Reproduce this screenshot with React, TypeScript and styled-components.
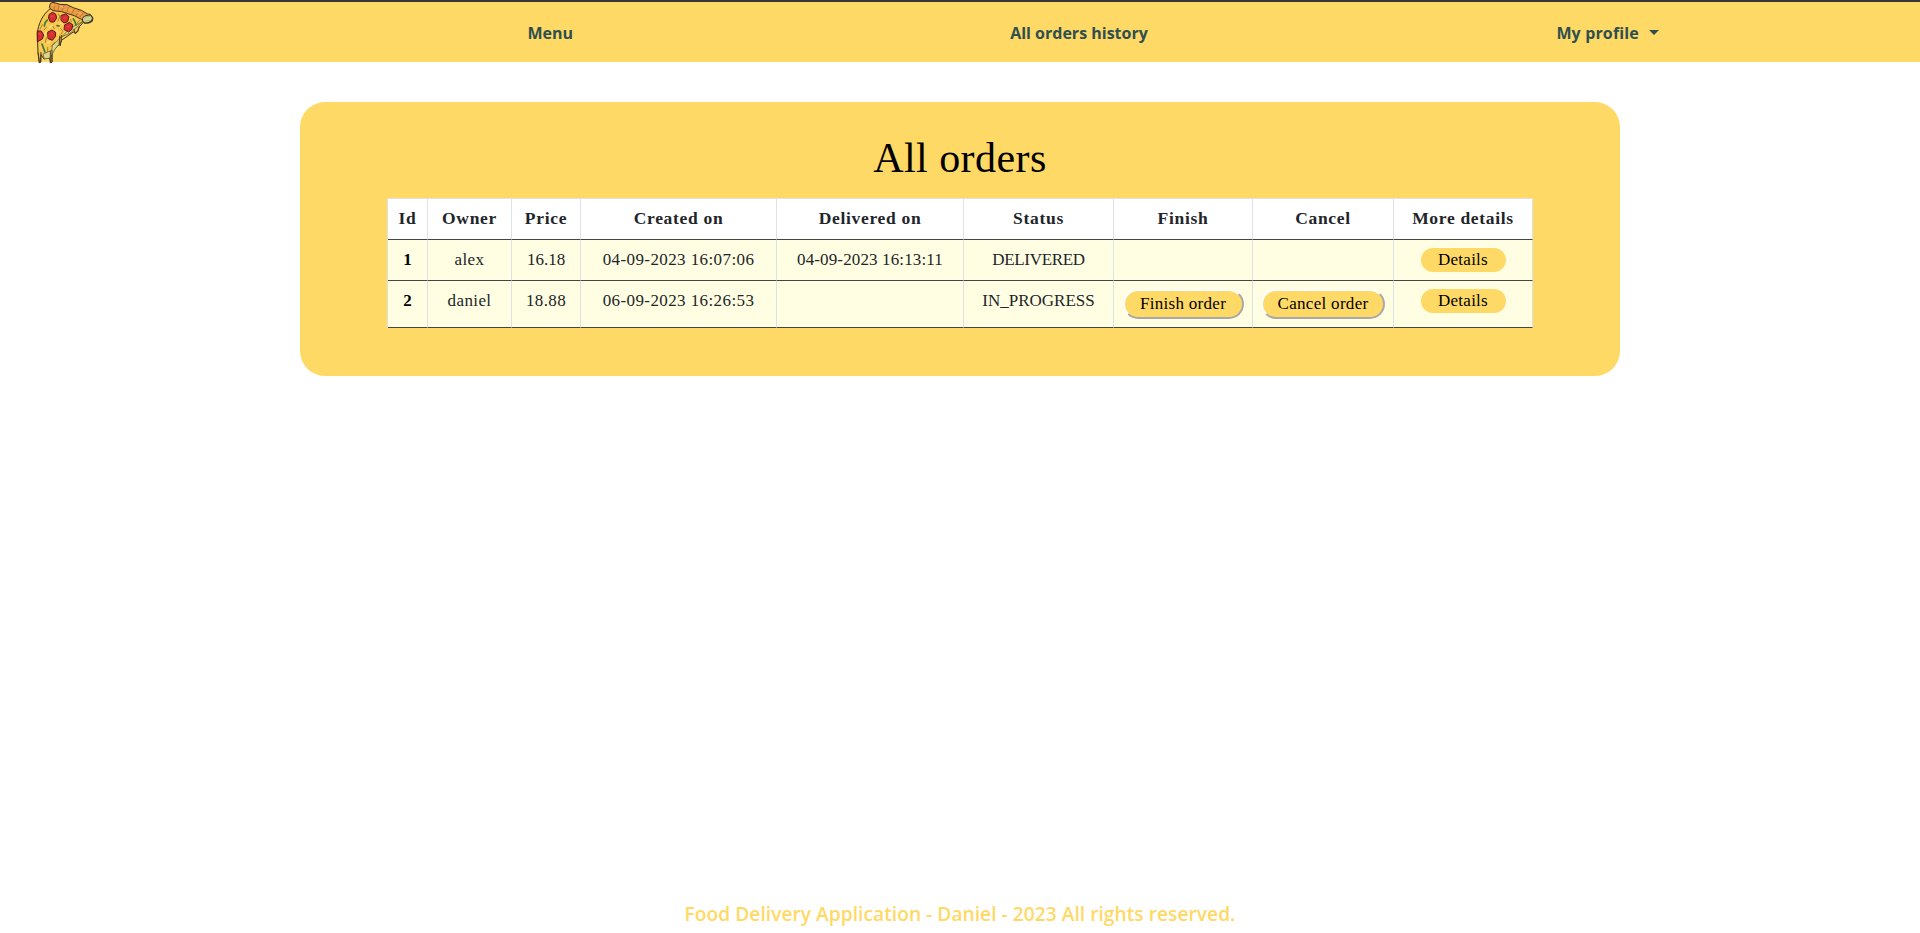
import React from "react";
import styled, { createGlobalStyle } from "styled-components";

const GlobalStyle = createGlobalStyle`
  *, *::before, *::after { box-sizing: border-box; }
  body {
    margin: 0;
    background: #fff;
    color: #212529;
    font-family: "Open Sans", "Noto Sans", sans-serif;
  }
`;

const Page = styled.div`
  min-height: 933px;
  display: flex;
  flex-direction: column;
`;

const Navbar = styled.nav`
  height: 62px;
  flex: none;
  display: flex;
  background: #ffd966;
  border-top: 2px solid #3a3536;
`;

const Brand = styled.a`
  width: 286px;
  height: 64px;
  flex: none;
  margin-top: -2px;
  padding-left: 25px;
  svg { display: block; }
`;

const NavList = styled.ul`
  list-style: none;
  margin: 0;
  padding: 0;
  width: 1586px;
  display: grid;
  grid-template-columns: repeat(3, 1fr);
`;

const NavItem = styled.li`
  display: flex;
  align-items: center;
  justify-content: center;
  padding-top: 2px;
`;

const NavLink = styled.a<{ $spacing?: string }>`
  color: #2f4f4f;
  font-size: 16px;
  line-height: 24px;
  font-weight: 700;
  letter-spacing: ${(p) => p.$spacing ?? "0"};
  white-space: nowrap;
`;

const Caret = styled.span`
  margin: 0 0 1px 10px;
  border: 5px solid transparent;
  border-top-color: #2f4f4f;
  border-bottom: 0;
`;

const Panel = styled.main`
  width: 1320px;
  height: 274px;
  margin: 40px auto 0;
  padding: 32px 0 0 87px;
  background: #ffd966;
  border-radius: 25px;
  font-family: "Liberation Serif", serif;
`;

const Title = styled.h1`
  margin: 0 87px 16px 0;
  text-align: center;
  color: #000;
  font-size: 42px;
  line-height: 48px;
  font-weight: 400;
  letter-spacing: 0.45px;
`;

const Table = styled.table`
  width: 1146px;
  table-layout: fixed;
  border-collapse: separate;
  border-spacing: 0;
  border-left: 1px solid #dee2e6;
  font-size: 17px;
  line-height: 24px;
  text-align: center;
`;

const Row = styled.tr<{ $height: number; $body?: boolean }>`
  height: ${(p) => p.$height}px;
  background: ${(p) => (p.$body ? "#fffee2" : "#fff")};
`;

const HeadCell = styled.th`
  padding: 7px 0 8px;
  border-top: 1px solid #dee2e6;
  border-right: 1px solid #dee2e6;
  border-bottom: 1px solid #424649;
  vertical-align: top;
  font-size: 17.5px;
  font-weight: 700;
  letter-spacing: 0.68px;
`;

const IdCell = styled.th`
  padding: 8px 0;
  border-right: 1px solid #dee2e6;
  border-bottom: 1px solid #424649;
  vertical-align: top;
  color: #000;
`;

const Cell = styled.td<{ $spacing?: string }>`
  padding: 8px 0;
  border-right: 1px solid #dee2e6;
  border-bottom: 1px solid #424649;
  vertical-align: top;
  letter-spacing: ${(p) => p.$spacing ?? "0.4px"};
  white-space: nowrap;
`;

const DetailsButton = styled.button`
  display: block;
  width: 85px;
  height: 24px;
  margin: 0 auto;
  padding: 0;
  border: 0;
  border-radius: 12px;
  background: #ffd966;
  color: #000;
  font: inherit;
  letter-spacing: 0.25px;
`;

const ActionButton = styled.button<{ $width: number }>`
  display: block;
  width: ${(p) => p.$width}px;
  height: 30px;
  margin: 0 auto;
  padding: 0 0 1px;
  border: 2px solid;
  border-color: #fff #a9a9a9 #a9a9a9 #fff;
  border-radius: 15px;
  background: #ffd966;
  color: #000;
  font: inherit;
  letter-spacing: 0.3px;
`;

const Footer = styled.footer`
  margin-top: auto;
  height: 33px;
  text-align: center;
  color: #ffd966;
  font-size: 19.2px;
  line-height: 28px;
  font-weight: 600;
  letter-spacing: 0.02px;
`;

const columns = [
  { label: "Id", width: 40 },
  { label: "Owner", width: 84 },
  { label: "Price", width: 69 },
  { label: "Created on", width: 196 },
  { label: "Delivered on", width: 187 },
  { label: "Status", width: 150 },
  { label: "Finish", width: 139 },
  { label: "Cancel", width: 141 },
  { label: "More details", width: 139 },
];

const orders = [
  { id: 1, owner: "alex", price: "16.18", created: "04-09-2023 16:07:06", delivered: "04-09-2023 16:13:11", status: "DELIVERED", open: false },
  { id: 2, owner: "daniel", price: "18.88", created: "06-09-2023 16:26:53", delivered: "", status: "IN_PROGRESS", open: true },
];

function PizzaLogo() {
  return (
    <svg width="75" height="66" viewBox="0 0 225 198" strokeLinecap="round" strokeLinejoin="round">
      <path d="M74 27 C52 45 40 72 37 100 L39 160 L43 188 L47 187 L48 164 L57 177 L68 174 L75 177 L76 188 L81 187 L81 157 L98 137 L103 135 L106 137 L108 122 L145 96 L152 101 L159 92 L163 80 L178 64 L160 42 Z" fill="#f9c84f" stroke="#3c301d" strokeWidth="3" />
      <path d="M172 65 L137 84 L82 137 L80 151 L54 162 L58 177 L75 174 L91 146 L101 134 L105 113 L137 98 Z" fill="#ddd68a" stroke="#544b27" strokeWidth="2" />
      <path d="M40 159 L43 188 M48 157 L47 186 M76 154 V188 M81 151 V184 M104 109 V134 M109 106 V126 M147 88 L149 98 L158 95 L162 81" fill="none" stroke="#4b3c20" strokeWidth="3" />
      <path d="M77 10 L84 7 L105 13 L126 14 L145 23 L169 31 L188 42 L196 43 L204 54 L202 64 L192 69 L178 70 L169 58 L148 47 L125 40 L110 35 L84 32 L74 24 Z" fill="#e99b43" stroke="#41301c" strokeWidth="3" />
      <path d="M90 10 L87 30 M103 13 L98 33 M118 15 L111 32 M133 20 L125 37 M148 27 L139 42 M162 32 L153 47 M174 39 L165 51" fill="none" stroke="#a95f29" strokeWidth="2" />
      <path d="M81 14 L91 16 M105 18 L115 23 M130 27 L140 31 M157 37 L168 40" fill="none" stroke="#ffca67" strokeWidth="2" />
      <ellipse cx="187" cy="57" rx="15" ry="11" transform="rotate(-18 187 57)" fill="#d6d794" stroke="#303920" strokeWidth="3" />
      <path d="M178 57 L184 51 L194 49 M181 63 L193 60" fill="none" stroke="#8a9b5b" strokeWidth="2" />
      <g fill="#d92e32" stroke="#571b15" strokeWidth="3">
        <path d="M73 43 L82 37 L92 42 L95 54 L87 66 L76 66 L71 55 Z" />
        <path d="M109 46 L122 42 L132 50 L128 65 L117 69 L109 62 Z" />
        <path d="M120 74 L133 67 L143 74 L141 88 L131 96 L118 89 Z" />
        <path d="M69 96 L81 90 L92 97 L91 110 L82 121 L70 116 Z" />
        <path d="M38 93 L49 93 L56 105 L52 117 L38 125 Z" />
      </g>
      <path d="M78 50 L85 48 M117 54 L123 53 M127 80 L134 78 M77 102 L83 101 M42 101 L47 103" stroke="#f04a40" strokeWidth="3" />
      <g fill="none" stroke="#347d3b" strokeWidth="5">
        <path d="M145 57 L150 65 L153 75" />
        <path d="M67 60 L61 67 L58 78" />
        <path d="M96 77 L102 78" />
        <path d="M51 132 L55 143 L60 156" />
      </g>
      <path d="M101 42 L104 52 L99 63 M64 82 L57 90 M83 78 L88 86 M107 86 L114 94 L107 103 M64 113 L61 127 M89 126 L78 139 M52 74 L45 88 M68 142 V155 M137 58 L139 65 M164 60 L153 74" fill="none" stroke="#80601f" strokeWidth="2" />
      <path d="M106 68 L112 73 M82 76 L72 84 M94 91 L101 102 M63 96 L59 104 M67 128 L74 125" fill="none" stroke="#ffe184" strokeWidth="4" />
    </svg>
  );
}

export default function App() {
  return (
    <>
      <GlobalStyle />
      <Page>
        <Navbar>
          <Brand aria-label="Home"><PizzaLogo /></Brand>
          <NavList>
            <NavItem><NavLink>Menu</NavLink></NavItem>
            <NavItem><NavLink>All orders history</NavLink></NavItem>
            <NavItem><NavLink $spacing="0.15px">My profile</NavLink><Caret /></NavItem>
          </NavList>
        </Navbar>
        <Panel>
          <Title>All orders</Title>
          <Table>
            <colgroup>
              {columns.map((c) => <col key={c.label} width={c.width} />)}
            </colgroup>
            <thead>
              <Row $height={42}>
                {columns.map((c) => <HeadCell key={c.label}>{c.label}</HeadCell>)}
              </Row>
            </thead>
            <tbody>
              {orders.map((o) => (
                <Row key={o.id} $body $height={o.open ? 47 : 41}>
                  <IdCell>{o.id}</IdCell>
                  <Cell>{o.owner}</Cell>
                  <Cell $spacing={o.open ? "0.4px" : "0"}>{o.price}</Cell>
                  <Cell>{o.created}</Cell>
                  <Cell $spacing="0.13px">{o.delivered}</Cell>
                  <Cell $spacing={o.open ? "0" : "-0.3px"}>{o.status}</Cell>
                  <Cell>{o.open && <ActionButton $width={121}>Finish order</ActionButton>}</Cell>
                  <Cell>{o.open && <ActionButton $width={124}>Cancel order</ActionButton>}</Cell>
                  <Cell><DetailsButton>Details</DetailsButton></Cell>
                </Row>
              ))}
            </tbody>
          </Table>
        </Panel>
        <Footer>Food Delivery Application - Daniel - 2023 All rights reserved.</Footer>
      </Page>
    </>
  );
}
